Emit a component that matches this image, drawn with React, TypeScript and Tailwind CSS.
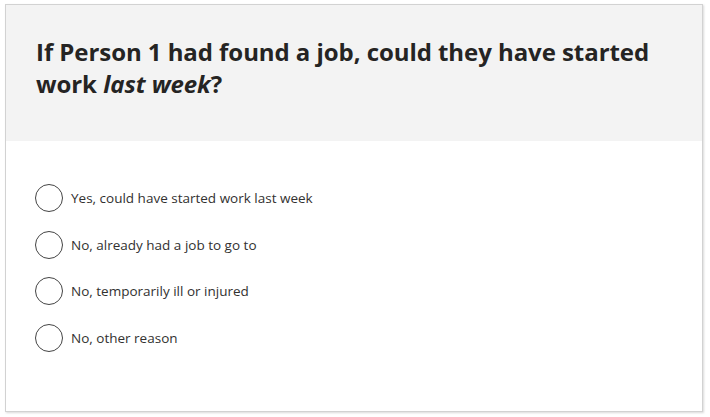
import React from "react";

const options = [
  "Yes, could have started work last week",
  "No, already had a job to go to",
  "No, temporarily ill or injured",
  "No, other reason",
];

export default function App() {
  return (
    <div className="w-[710px] h-[417px] bg-white pl-[5px] pt-[4px]" style={{ fontFamily: '"Open Sans", sans-serif' }}>
      <div className="w-[698px] h-[408px] border border-[#d2d2d2] shadow-[1px_1px_2px_rgba(0,0,0,0.15)] bg-white flex flex-col">
        <div className="h-[136px] bg-[#f3f3f3] px-[30px] pt-[31px]">
          <h1 className="text-[24px] leading-[32px] font-bold text-[#252423] tracking-[-0.06px]">
            If Person 1 had found a job, could they have started work <em className="italic">last week</em>?
          </h1>
        </div>
        <div className="flex flex-col pl-[29px] pt-[43px] gap-[18.7px]">
          {options.map((o) => (
            <label key={o} className="flex items-center h-[28px] gap-[8px]">
              <span className="w-[28px] h-[28px] rounded-full border border-[#444] bg-white shrink-0" />
              <span className="text-[13.5px] text-[#323130]">{o}</span>
            </label>
          ))}
        </div>
      </div>
    </div>
  );
}
